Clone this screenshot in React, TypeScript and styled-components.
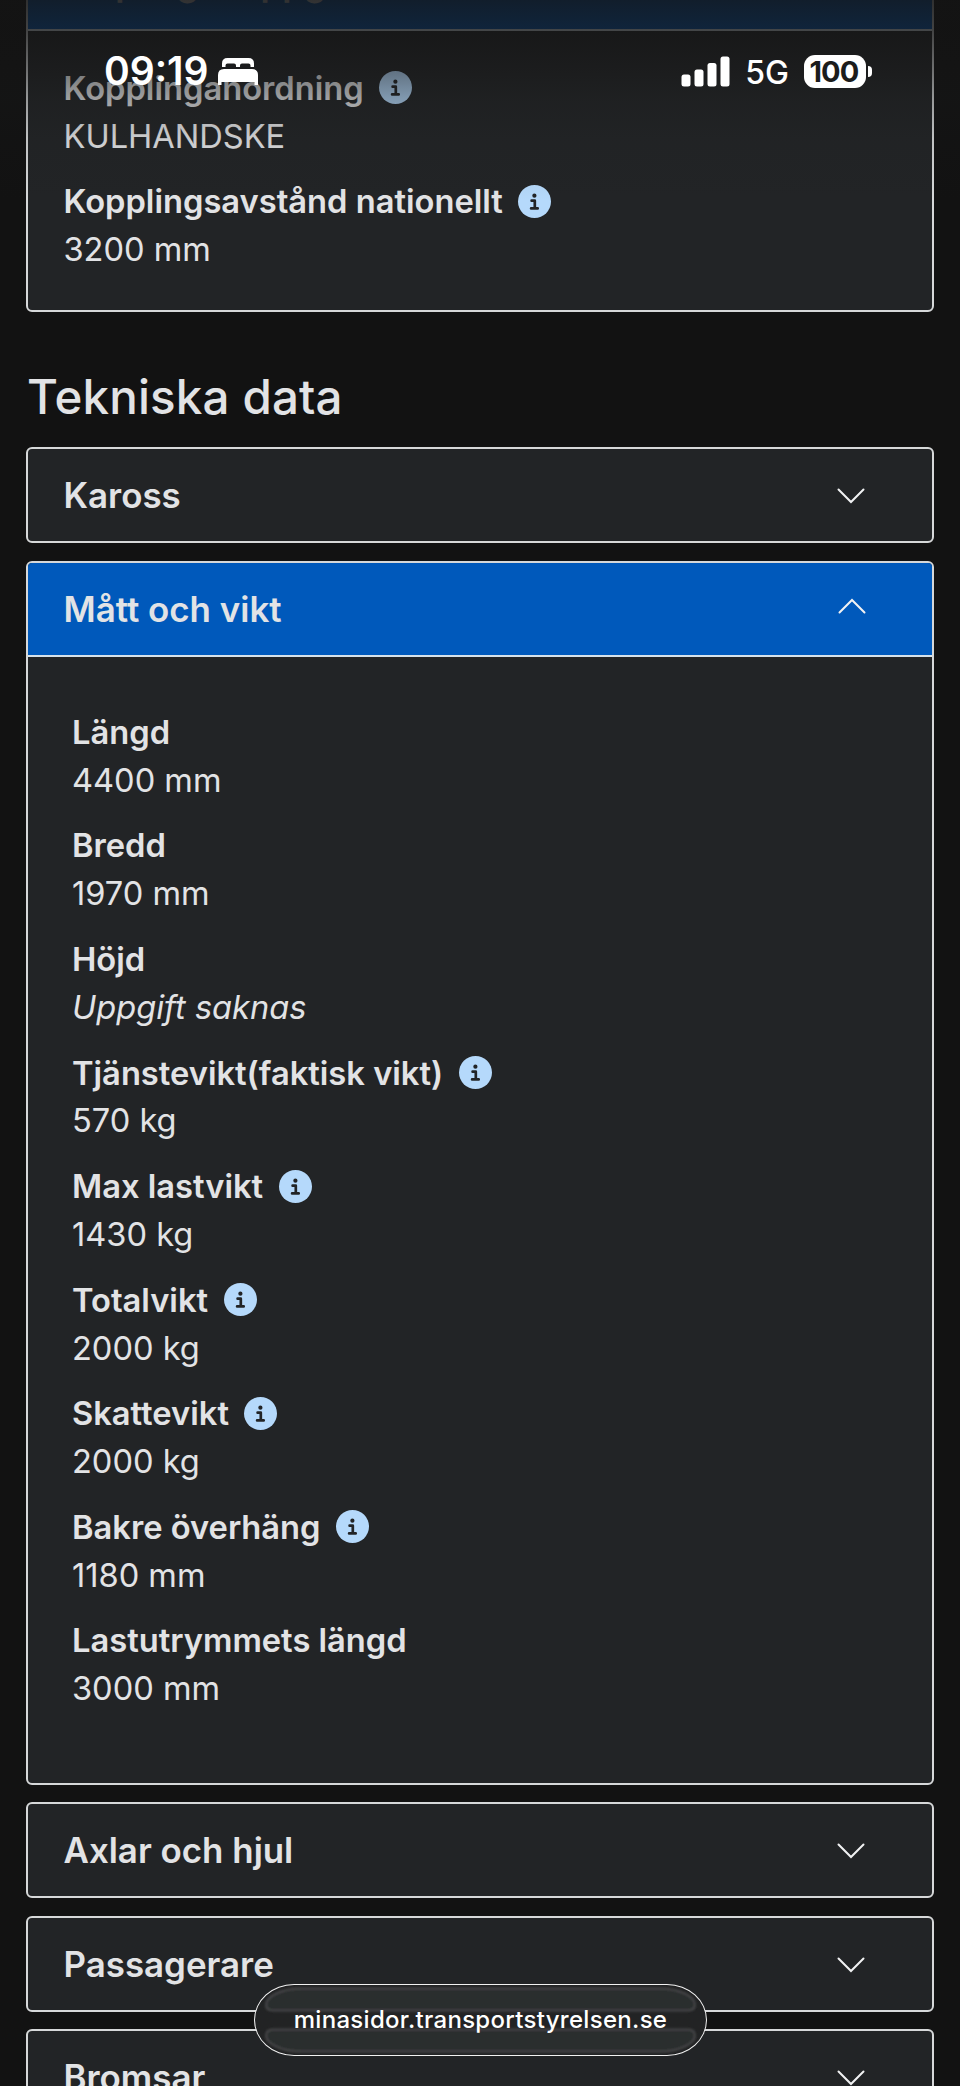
import React from "react";
import styled, { createGlobalStyle } from "styled-components";

const Global = createGlobalStyle`
  * { box-sizing: border-box; }
  html, body { margin: 0; padding: 0; background: #121212; }
  body { width: 960px; height: 2086px; overflow: hidden; }
`;

const Screen = styled.div`
  position: relative;
  width: 960px;
  height: 2086px;
  overflow: hidden;
  background: #121212;
  color: #e2e3e5;
  font-family: Inter, "Liberation Sans", sans-serif;
`;

const Page = styled.main`
  display: flex;
  flex-direction: column;
  margin-top: -65.2px;
  padding: 0 26px;
`;

const Heading = styled.h2`
  margin: 55px 0 21.5px 1px;
  font-size: 47.5px;
  line-height: 59px;
  font-weight: 460;
  letter-spacing: 0.15px;
`;

const List = styled.div`
  display: flex;
  flex-direction: column;
  gap: 17.4px;
`;

const Panel = styled.section`
  flex: none;
  border: 2px solid #d6d8d9;
  border-radius: 6px;
  background: #222426;
  overflow: hidden;
`;

const PanelHeader = styled.div<{ $open?: boolean }>`
  display: flex;
  align-items: center;
  justify-content: space-between;
  height: ${(p) => (p.$open ? 94 : 92)}px;
  padding: 0 66px 0 35.5px;
  background: ${(p) => (p.$open ? "#0059bb" : "transparent")};
  border-bottom: ${(p) => (p.$open ? "2px solid #d6e2ea" : "none")};
`;

const PanelTitle = styled.h3`
  margin: 0;
  font-size: 34.9px;
  line-height: 48px;
  font-weight: 600;
`;

const Chevron = styled.svg<{ $up?: boolean }>`
  width: 30px;
  height: 16px;
  transform: ${(p) => (p.$up ? "translate(1px, -3px) rotate(180deg)" : "translateY(1px)")};
`;

const Fields = styled.dl<{ $inset?: boolean }>`
  display: flex;
  flex-direction: column;
  gap: 17.75px;
  margin: 0;
  padding: ${(p) => (p.$inset ? "52px 44px 69.9px" : "34px 35.5px 35.8px")};
`;

const Label = styled.dt`
  display: flex;
  align-items: center;
  gap: 15.5px;
  font-size: 32.68px;
  line-height: 47.9px;
  font-weight: 600;
`;

const Value = styled.dd<{ $missing?: boolean }>`
  margin: 0;
  font-size: 32.6px;
  line-height: 47.9px;
  font-weight: 390;
  font-style: ${(p) => (p.$missing ? "italic" : "normal")};
`;

const InfoSvg = styled.svg`
  width: 33px;
  height: 33px;
  flex: none;
  margin-bottom: 2px;
`;

const TopShade = styled.div`
  position: absolute;
  inset: 0 0 auto;
  height: 210px;
  background: linear-gradient(
    rgba(20, 20, 20, 0.86) 0,
    rgba(20, 20, 20, 0.76) 30px,
    rgba(22, 22, 22, 0.52) 72px,
    rgba(24, 25, 25, 0.34) 98px,
    rgba(26, 27, 28, 0.12) 138px,
    rgba(30, 31, 32, 0) 200px
  );
`;

const StatusBar = styled.div`
  position: absolute;
  inset: 0 0 auto;
  display: flex;
  align-items: center;
  justify-content: space-between;
  height: 142px;
  padding: 0 88px 0 104px;
  color: #fff;
`;

const StatusGroup = styled.div`
  display: flex;
  align-items: center;
`;

const Clock = styled.span`
  font-size: 39px;
  line-height: 48px;
  font-weight: 560;
`;

const BedSvg = styled.svg`
  width: 40px;
  height: 28px;
  margin: 2px 0 0 9.5px;
`;

const SignalSvg = styled.svg`
  width: 49px;
  height: 31px;
`;

const Network = styled.span`
  margin: 3px 0 0 15.5px;
  font-size: 32px;
  line-height: 40px;
  font-weight: 450;
`;

const Battery = styled.span`
  display: flex;
  align-items: center;
  justify-content: center;
  width: 62px;
  height: 33px;
  margin-left: 15px;
  padding-right: 2px;
  border-radius: 11px;
  background: #fff;
  color: #1b1c1c;
  font-size: 29px;
  font-weight: 700;
  letter-spacing: -0.8px;
`;

const BatteryTip = styled.span`
  width: 4px;
  height: 11px;
  margin-left: 2px;
  border-radius: 0 5px 5px 0;
  background: #fff;
`;

const AddressPill = styled.div`
  position: absolute;
  left: 254px;
  top: 1984px;
  width: 453px;
  height: 72px;
  display: flex;
  align-items: center;
  justify-content: center;
  border: 1.5px solid #f2f2f2;
  border-radius: 40px / 36px;
  background: #222324;
  overflow: hidden;
`;

const Glass = styled.svg`
  position: absolute;
  inset: 0;
  width: 100%;
  height: 100%;
`;

const Address = styled.span`
  position: relative;
  color: #fff;
  font-size: 24px;
  line-height: 32px;
  font-weight: 480;
  letter-spacing: 0.3px;
`;

type Field = { label: string; value: string; info?: boolean; missing?: boolean };

const coupling: Field[] = [
  { label: "Kopplinganordning", value: "KULHANDSKE", info: true },
  { label: "Kopplingsavstånd nationellt", value: "3200 mm", info: true },
];

const measures: Field[] = [
  { label: "Längd", value: "4400 mm" },
  { label: "Bredd", value: "1970 mm" },
  { label: "Höjd", value: "Uppgift saknas", missing: true },
  { label: "Tjänstevikt(faktisk vikt)", value: "570 kg", info: true },
  { label: "Max lastvikt", value: "1430 kg", info: true },
  { label: "Totalvikt", value: "2000 kg", info: true },
  { label: "Skattevikt", value: "2000 kg", info: true },
  { label: "Bakre överhäng", value: "1180 mm", info: true },
  { label: "Lastutrymmets längd", value: "3000 mm" },
];

const InfoIcon = () => (
  <InfoSvg viewBox="0 0 33 33">
    <circle cx="16.5" cy="16.5" r="16.5" fill="#b5d9fb" />
    <circle cx="16.4" cy="10.7" r="2.1" fill="#222426" />
    <path d="M13.6 15.7h3.2v7.6M13.1 23.4h6.6" fill="none" stroke="#222426" strokeWidth="2.7" strokeLinecap="round" strokeLinejoin="round" />
  </InfoSvg>
);

const FieldList = ({ fields, inset }: { fields: Field[]; inset?: boolean }) => (
  <Fields $inset={inset}>
    {fields.map((f) => (
      <div key={f.label}>
        <Label>
          <span>{f.label}</span>
          {f.info && <InfoIcon />}
        </Label>
        <Value $missing={f.missing}>{f.value}</Value>
      </div>
    ))}
  </Fields>
);

const Accordion = ({ title, fields, inset }: { title: string; fields?: Field[]; inset?: boolean }) => (
  <Panel>
    <PanelHeader $open={!!fields}>
      <PanelTitle>{title}</PanelTitle>
      <Chevron $up={!!fields} viewBox="0 0 30 16">
        <path d="M2.5 1.5 15 14 27.5 1.5" fill="none" stroke="#f1f2f3" strokeWidth="2" strokeLinecap="round" />
      </Chevron>
    </PanelHeader>
    {fields && <FieldList fields={fields} inset={inset} />}
  </Panel>
);

export default function App() {
  return (
    <>
      <Global />
      <Screen>
        <Page>
          <Accordion title="Släpvagnsuppgifter" fields={coupling} />
          <Heading>Tekniska data</Heading>
          <List>
            <Accordion title="Kaross" />
            <Accordion title="Mått och vikt" fields={measures} inset />
            <Accordion title="Axlar och hjul" />
            <Accordion title="Passagerare" />
            <Accordion title="Bromsar" />
          </List>
        </Page>
        <TopShade />
        <StatusBar>
          <StatusGroup>
            <Clock>09:19</Clock>
            <BedSvg viewBox="0 0 40 28" fill="#fff">
              <path d="M4 9V5.500Q4 0 9.500 0H30.500Q36 0 36 5.500V9H32.500V7.500Q32.500 5.500 30.500 5.500H24Q22 5.500 22 7.500V9H18V7.500Q18 5.500 16 5.500H9.500Q7.500 5.500 7.500 7.500V9Z" />
              <path d="M0 27V17Q0 11 6 11H34Q40 11 40 17V27H36.500V24H3.500V27Z" />
            </BedSvg>
          </StatusGroup>
          <StatusGroup>
            <SignalSvg viewBox="0 0 49 31" fill="#fff">
              <rect x="0.500" y="18.500" width="9" height="12" rx="2.500" />
              <rect x="13.500" y="13.500" width="9" height="17" rx="2.500" />
              <rect x="26.500" y="7" width="9" height="23.500" rx="2.500" />
              <rect x="39.500" y="0.500" width="9" height="30" rx="2.500" />
            </SignalSvg>
            <Network>5G</Network>
            <Battery>100</Battery>
            <BatteryTip />
          </StatusGroup>
        </StatusBar>
        <AddressPill>
          <Glass viewBox="0 0 450 69">
            <defs>
              <filter id="soft" x="-5%" y="-20%" width="110%" height="140%">
                <feGaussianBlur stdDeviation="1.1" />
              </filter>
            </defs>
            <g fill="#2c2d2f" stroke="#464748" strokeWidth="2" filter="url(#soft)">
              <path d="M46 3H404C426 3 439 12 439 19Q439 25 432 25H18Q11 25 11 19C11 12 24 3 46 3Z" />
              <path d="M46 66H404C426 66 439 57 439 50Q439 44 432 44H18Q11 44 11 50C11 57 24 66 46 66Z" />
            </g>
          </Glass>
          <Address>minasidor.transportstyrelsen.se</Address>
        </AddressPill>
      </Screen>
    </>
  );
}
